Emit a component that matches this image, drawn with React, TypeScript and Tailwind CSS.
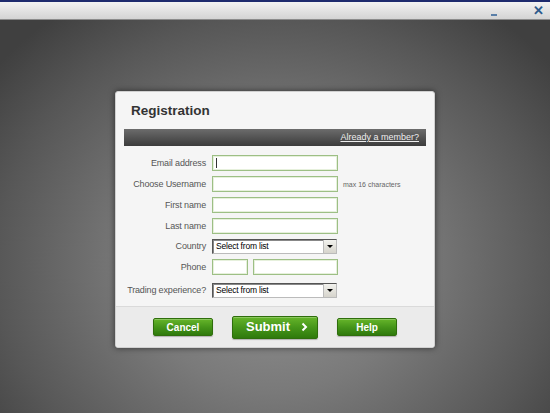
import React from 'react';

const labelCls = 'w-[90px] shrink-0 whitespace-nowrap text-right text-[9px] tracking-[-0.15px] text-[#555] leading-none';
const inputCls = 'h-[16px] bg-white border border-[#9dbf85] shadow-[inset_0_0_0_1px_#e6f0dc]';

function Row({ label, children, className = '' }: { label: string; children: React.ReactNode; className?: string }) {
  return (
    <div className={`flex items-center ${className}`}>
      <div className={labelCls}>{label}</div>
      <div className="ml-[6px] flex items-center">{children}</div>
    </div>
  );
}

function FakeSelect() {
  return (
    <div className="w-[125px] h-[15px] bg-white border border-[#555] border-b-[#bbb] border-r-[#bbb] flex items-center justify-between shadow-[inset_1px_1px_0_#888]">
      <span className="pl-[3px] text-[8.5px] text-black leading-none tracking-[-0.2px]">Select from list</span>
      <span className="w-[13px] h-[13px] bg-gradient-to-b from-[#f2f2ee] to-[#d6d4cc] border-l border-[#bbb] flex items-center justify-center">
        <span className="w-0 h-0 border-l-[3px] border-r-[3px] border-t-[3px] border-l-transparent border-r-transparent border-t-black" />
      </span>
    </div>
  );
}

function GreenButton({ children, className = '' }: { children: React.ReactNode; className?: string }) {
  return (
    <button
      className={`flex items-center justify-center rounded-[2px] border border-[#2f6e0c] bg-gradient-to-b from-[#66b52a] via-[#46961a] to-[#2f7a0c] text-white font-bold shadow-[0_1px_1px_rgba(0,0,0,0.25),inset_0_1px_0_rgba(255,255,255,0.25)] ${className}`}
    >
      {children}
    </button>
  );
}

export default function App() {
  return (
    <div className="w-[550px] h-[413px] overflow-hidden flex flex-col font-['Liberation_Sans',Arial,sans-serif]">
      {/* window chrome */}
      <div className="h-[2px] bg-[#1e2b6e]" />
      <div className="h-[18px] bg-gradient-to-b from-[#f3f3f3] to-[#d4d4d4] border-b border-[#8c8c8c] flex items-center justify-end pr-[6px]">
        <span className="w-[6px] h-[2px] bg-[#5a7fa8] mt-[9px]" />
        <span className="ml-[36px] text-[#2d5a8c] text-[13px] font-bold leading-none">✕</span>
      </div>

      {/* backdrop */}
      <div className="flex-1 flex justify-center pt-[71px] bg-[radial-gradient(ellipse_65%_80%_at_50%_62%,#959595_0%,#7a7a7a_40%,#575757_78%,#404040_100%)]">
        <div className="w-[320px] h-[257px] rounded-[3px] bg-[#f5f5f5] border border-[#d0d0d0] shadow-[0_0_6px_rgba(0,0,0,0.55)] flex flex-col overflow-hidden">
          <div className="h-[37px] pl-[15px] pt-[10px] text-[13.5px] leading-[18px] font-bold text-[#333]">Registration</div>

          <div className="mx-[8px] h-[17px] bg-gradient-to-b from-[#6c6c6c] to-[#3c3c3c] flex items-center justify-end pr-[7px]">
            <span className="text-[9px] leading-none text-[#eee] underline">Already a member?</span>
          </div>

          <div className="flex flex-col">
            <Row label="Email address" className="mt-[9px]">
              <div className={`${inputCls} w-[126px] flex items-center pl-[3px]`}>
                <span className="w-[1px] h-[10px] bg-[#333]" />
              </div>
            </Row>
            <Row label="Choose Username" className="mt-[5px]">
              <div className={`${inputCls} w-[126px]`} />
              <span className="ml-[5px] text-[7px] text-[#666] leading-none">max 16 characters</span>
            </Row>
            <Row label="First name" className="mt-[5px]">
              <div className={`${inputCls} w-[126px]`} />
            </Row>
            <Row label="Last name" className="mt-[5px]">
              <div className={`${inputCls} w-[126px]`} />
            </Row>
            <Row label="Country" className="mt-[5px]">
              <FakeSelect />
            </Row>
            <Row label="Phone" className="mt-[5px]">
              <div className={`${inputCls} w-[36px]`} />
              <div className={`${inputCls} w-[85px] ml-[5px]`} />
            </Row>
            <Row label="Trading experience?" className="mt-[8px]">
              <FakeSelect />
            </Row>
          </div>

          <div className="mt-auto h-[41px] border-t border-[#dadada] bg-[#ebebeb] flex items-center justify-center gap-[19px]">
            <GreenButton className="w-[60px] h-[18px] text-[10px]">Cancel</GreenButton>
            <GreenButton className="w-[86px] h-[23px] text-[13px] pl-[4px]">
              <span>Submit</span>
              <svg className="ml-[11px]" width="7" height="10" viewBox="0 0 7 10">
                <path d="M1.5 1.5 L5 5 L1.5 8.5" stroke="white" strokeWidth="2" fill="none" />
              </svg>
            </GreenButton>
            <GreenButton className="w-[60px] h-[18px] text-[10px]">Help</GreenButton>
          </div>
        </div>
      </div>
    </div>
  );
}
